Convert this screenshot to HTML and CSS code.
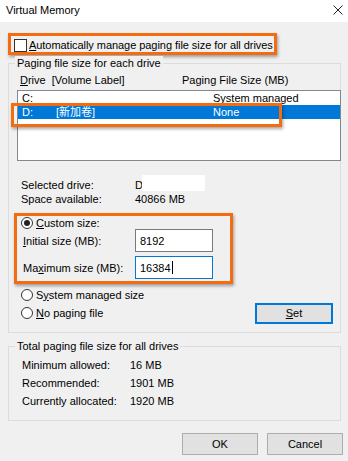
FILE: index.html
```html
<!DOCTYPE html>
<html lang="en">
<head>
    <meta charset="UTF-8">
    <title>Virtual Memory</title>
    <link rel="stylesheet" href="styles.css">
</head>
<body>
    <div class="titlebar">
        <span class="title">Virtual Memory</span>
        <svg class="close" width="10" height="10" viewBox="0 0 10 10">
            <path d="M0.5 0.5 L9.5 9.5 M9.5 0.5 L0.5 9.5" stroke="#222" stroke-width="1" fill="none"/>
        </svg>
    </div>

    <div class="content">
        <!-- 自动管理 -->
        <div class="mark mark-auto">
            <span class="checkbox"></span>
            <span class="check-text"><u>A</u>utomatically manage paging file size for all drives</span>
        </div>

        <div class="group group-drives">
            <span class="legend">Paging file size for each drive</span>

            <div class="list-head">
                <span class="col-drive"><u>D</u>rive <span class="vol">[Volume Label]</span></span>
                <span class="col-size">Paging File Size (MB)</span>
            </div>

            <div class="listbox">
                <div class="row">
                    <span class="cell-drive">C:</span>
                    <span class="cell-label"></span>
                    <span class="cell-size">System managed</span>
                </div>
                <div class="row selected">
                    <span class="cell-drive">D:</span>
                    <span class="cell-label">[新加卷]</span>
                    <span class="cell-size">None</span>
                </div>
            </div>

            <div class="info">
                <div class="info-row">
                    <span class="info-label">Selected drive:</span>
                    <span class="info-value">D<span class="redact"></span></span>
                </div>
                <div class="info-row">
                    <span class="info-label">Space available:</span>
                    <span class="info-value">40866 MB</span>
                </div>
            </div>

            <!-- 自定义大小 -->
            <div class="mark mark-custom">
                <div class="radio-row custom">
                    <span class="radio checked"></span>
                    <span class="radio-text"><u>C</u>ustom size:</span>
                </div>
                <div class="field">
                    <span class="field-label"><u>I</u>nitial size (MB):</span>
                    <div class="textbox">8192</div>
                </div>
                <div class="field field-gap">
                    <span class="field-label">Ma<u>x</u>imum size (MB):</span>
                    <div class="textbox focused">16384<span class="caret"></span></div>
                </div>
            </div>

            <div class="radio-row system">
                <span class="radio"></span>
                <span class="radio-text">S<u>y</u>stem managed size</span>
            </div>

            <div class="radio-row nopaging">
                <div class="radio-left">
                    <span class="radio"></span>
                    <span class="radio-text"><u>N</u>o paging file</span>
                </div>
                <button class="btn btn-set"><u>S</u>et</button>
            </div>
        </div>

        <div class="group group-total">
            <span class="legend">Total paging file size for all drives</span>
            <div class="total-row">
                <span class="total-label">Minimum allowed:</span>
                <span>16 MB</span>
            </div>
            <div class="total-row">
                <span class="total-label">Recommended:</span>
                <span>1901 MB</span>
            </div>
            <div class="total-row">
                <span class="total-label">Currently allocated:</span>
                <span>1920 MB</span>
            </div>
        </div>

        <div class="buttons">
            <button class="btn btn-dialog">OK</button>
            <button class="btn btn-dialog">Cancel</button>
        </div>
    </div>
</body>
</html>
```

FILE: styles.css
```css
/* 基础重置 */
* {
    margin: 0;
    padding: 0;
    box-sizing: border-box;
}

html, body {
    width: 100%;
    height: 100%;
    overflow: hidden;
}

body {
    background: #f0f0f0;
    font-family: "Liberation Sans", Arial, "Noto Sans CJK SC", sans-serif;
    font-size: 11px;
    line-height: 14px;
    color: #000;
    white-space: nowrap;
}

u {
    text-decoration: underline;
    text-underline-offset: 1px;
}

/* 标题栏 */
.titlebar {
    height: 22px;
    background: #fff;
    display: flex;
    align-items: center;
    justify-content: space-between;
    padding: 0 5px 2px 6px;
}

.close {
    display: block;
    margin-top: -1px;
}

.content {
    padding: 0 7px 0 8px;
}

/* 橙色标注框 */
.mark {
    border: 3px solid #f36c12;
    box-shadow: 1px 2px 3px rgba(0,0,0,0.35);
}

.mark-auto {
    margin-top: 11px;
    width: 269px;
    height: 22px;
    display: flex;
    align-items: center;
    padding: 2px 0 0 3px;
}

.checkbox {
    width: 13px;
    height: 13px;
    border: 1px solid #333;
    background: #fff;
    flex-shrink: 0;
}

.check-text {
    margin-left: 2px;
    letter-spacing: -0.05px;
}

/* 分组框 */
.group {
    border: 1px solid #dcdcdc;
    margin-top: 8px;
}

.legend {
    display: block;
    width: max-content;
    height: 14px;
    margin: -8px 0 0 6px;
    padding: 0 2px;
    background: #f0f0f0;
}

.list-head {
    display: flex;
    height: 14px;
    margin-top: 3px;
    padding-left: 11px;
}

.col-drive {
    width: 162px;
}

.vol {
    margin-left: 3px;
}

.listbox {
    margin: 3px -1px 0 8px;
    height: 71px;
    border: 1px solid #828790;
    background: #fff;
}

.row {
    position: relative;
    display: flex;
    align-items: center;
    height: 14px;
}

.row.selected {
    background: #0078d7;
    color: #fff;
}

/* 选中行的标注 */
.row.selected::after {
    content: '';
    position: absolute;
    left: -7px;
    top: -2px;
    width: 265px;
    height: 18px;
    border: 3px solid #f36c12;
    box-shadow: 1px 2px 3px rgba(0,0,0,0.35);
}

.cell-drive {
    width: 38px;
    padding-left: 4px;
}

.cell-label {
    width: 157px;
}

.info {
    margin-top: 17px;
    padding-left: 12px;
}

.info-row {
    display: flex;
    height: 14px;
}

.info-label {
    width: 114px;
}

.info-value {
    display: flex;
}

.redact {
    display: block;
    width: 63px;
    height: 16px;
    margin: -3px 0 0 -1px;
    background: #fff;
}

.mark-custom {
    margin: 7px 0 0 5px;
    width: 219px;
    padding-bottom: 2px;
}

.radio-row {
    display: flex;
    align-items: center;
}

.radio-row.custom {
    height: 13px;
    padding-left: 4px;
}

.radio {
    width: 12px;
    height: 12px;
    border: 1px solid #333;
    border-radius: 50%;
    background: #fff;
    flex-shrink: 0;
    position: relative;
}

.radio.checked::after {
    content: '';
    position: absolute;
    left: 2px;
    top: 2px;
    width: 6px;
    height: 6px;
    border-radius: 50%;
    background: #222;
}

.radio-text {
    margin-left: 3px;
}

.field {
    display: flex;
    align-items: center;
    height: 23px;
    padding-left: 6px;
}

.field-gap {
    margin-top: 4px;
}

.field-label {
    width: 112px;
}

.textbox {
    width: 78px;
    height: 23px;
    border: 1px solid #7a7a7a;
    background: #fff;
    padding-left: 4px;
    display: flex;
    align-items: center;
}

.textbox.focused {
    border-color: #0078d7;
}

.caret {
    display: block;
    width: 1px;
    height: 13px;
    background: #000;
    margin-left: 1px;
}

.radio-row.system {
    margin-top: 4px;
    height: 13px;
    padding-left: 12px;
}

.radio-row.nopaging {
    margin-top: 1px;
    height: 22px;
    padding: 0 7px 0 12px;
    justify-content: space-between;
}

.radio-left {
    display: flex;
    align-items: center;
}

.group-drives {
    padding-bottom: 8px;
}

/* 按钮 */
.btn {
    font: inherit;
    color: #000;
    background: #e1e1e1;
    border: 1px solid #adadad;
    display: flex;
    align-items: center;
    justify-content: center;
}

.btn-set {
    width: 78px;
    height: 21px;
    border: 2px solid #0078d7;
}

.group-total {
    margin-top: 13px;
    padding-bottom: 10px;
}

.total-row {
    display: flex;
    align-items: center;
    height: 18px;
    padding-left: 13px;
}

.total-row:first-of-type {
    margin-top: 3px;
}

.total-label {
    width: 108px;
}

.buttons {
    display: flex;
    justify-content: flex-end;
    gap: 9px;
    margin: 12px -2px 0 0;
}

.btn-dialog {
    width: 76px;
    height: 22px;
}
```
